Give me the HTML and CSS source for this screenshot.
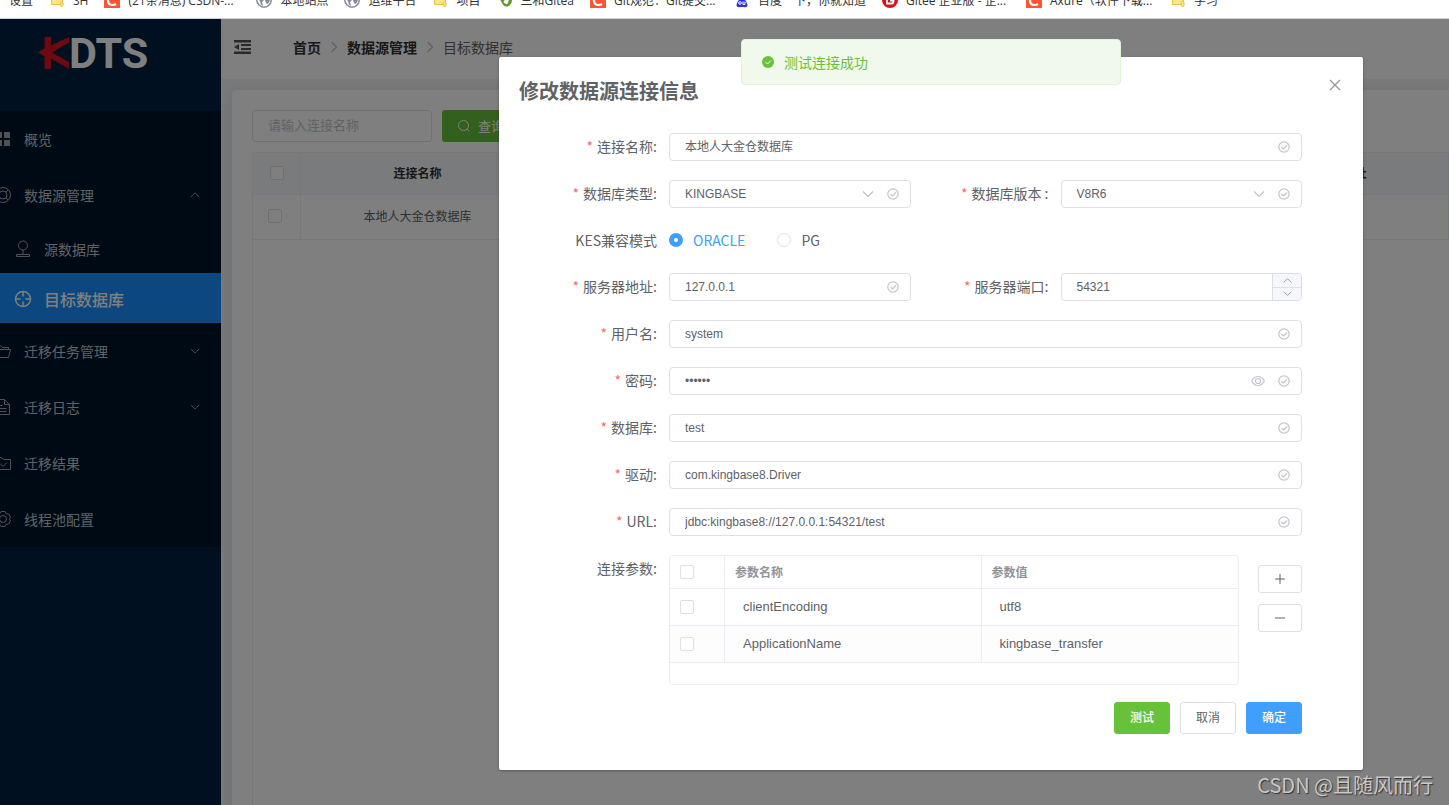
FILE: index.html
```html
<!DOCTYPE html>
<html lang="zh-CN">
<head>
<meta charset="utf-8">
<title>KDTS</title>
<link rel="stylesheet" href="styles.css">
</head>
<body>
<svg class="defs" aria-hidden="true">
  <symbol id="i-folder" viewBox="0 0 16 16"><path d="M2.500 1.500h11v11h-11z" fill="#ffe48f" stroke="#e8c04a"/><path d="M12 14.500c-1.500-1-1-4 .5-5.500c2 1 2 4.500 1 5.500z" fill="#ffe48f" stroke="#e8c04a"/></symbol>
  <symbol id="i-csdn" viewBox="0 0 16 16"><rect width="16" height="16" fill="#fc5531"/><path d="M12.500 4.500C8 2.500 4 4.500 4 8.500c0 4.500 4.500 5.500 8 3.500" fill="none" stroke="#fff" stroke-width="2.200"/></symbol>
  <symbol id="i-globe" viewBox="0 0 16 16"><circle cx="8" cy="8" r="7.200" fill="#fff" stroke="#858b98" stroke-width="1.500"/><path d="M2 4l4 1 2 3-2 2 1 4-2-1-1-4-2-2zM9 2l4 2 1 4-2 4-2-1-1-3 2-2-2-1z" fill="#858b98"/></symbol>
  <symbol id="i-gitea" viewBox="0 0 16 16"><path d="M0 6c2-2 6 0 8-2 4-1 7 0 7 4s-3 7-6 6.500S5 11 4 9 1 8 0 6z" fill="#609926"/><path d="M8 7l4 1.500-2 4-3.500-2z" fill="#fff"/></symbol>
  <symbol id="i-baidu" viewBox="0 0 16 16"><path d="M8 6c3 0 5 5 5.500 7 0 3-3 2-5.500 2s-5.500 1-5.500-2C3 11 5 6 8 6z" fill="#2932e1"/><g fill="#2932e1"><circle cx="3" cy="6" r="2"/><circle cx="6" cy="3" r="2"/><circle cx="10" cy="3" r="2"/><circle cx="13" cy="6" r="2"/></g><circle cx="6" cy="11" r="1.300" fill="none" stroke="#fff"/><path d="M9 9.500v3h2v-3" fill="none" stroke="#fff"/></symbol>
  <symbol id="i-gitee" viewBox="0 0 16 16"><circle cx="8" cy="8" r="8" fill="#d8111f"/><path d="M12 4.500H7Q5 4.500 5 7v4.500h5Q11.500 11.500 11.500 8.500H8" fill="none" stroke="#fff" stroke-width="1.800"/></symbol>
  <symbol id="i-check" viewBox="0 0 12 12"><g fill="none" stroke="currentColor" stroke-width="1.200"><circle cx="6" cy="6" r="5.200"/><path d="M3.500 6l2 2 3.500-3.500"/></g></symbol>
  <symbol id="i-down" viewBox="0 0 12 12"><path d="M1 3.500l5 5 5-5" fill="none" stroke="currentColor" stroke-width="1.200"/></symbol>
  <symbol id="i-up" viewBox="0 0 12 12"><path d="M1 8.500l5-5 5 5" fill="none" stroke="currentColor" stroke-width="1.200"/></symbol>
  <symbol id="i-right" viewBox="0 0 12 12"><path d="M3.500 1l5 5-5 5" fill="none" stroke="currentColor" stroke-width="1.400"/></symbol>
</svg>

<nav class="bookmarks" aria-label="书签">
  <a href="#"><span>设置</span></a>
  <a href="#"><svg><use href="#i-folder"/></svg><span>SH</span></a>
  <a href="#"><svg><use href="#i-csdn"/></svg><span class="wide">(21条消息) CSDN-...</span></a>
  <a href="#"><svg><use href="#i-globe"/></svg><span>本地站点</span></a>
  <a href="#"><svg><use href="#i-globe"/></svg><span>运维平台</span></a>
  <a href="#"><svg><use href="#i-folder"/></svg><span>项目</span></a>
  <a href="#"><svg><use href="#i-gitea"/></svg><span>三和Gitea</span></a>
  <a href="#"><svg><use href="#i-csdn"/></svg><span class="long">Git规范：Git提交...</span></a>
  <a href="#"><svg><use href="#i-baidu"/></svg><span>百度一下，你就知道</span></a>
  <a href="#"><svg><use href="#i-gitee"/></svg><span class="long">Gitee 企业版 - 企...</span></a>
  <a href="#"><svg><use href="#i-csdn"/></svg><span class="long">Axure（软件下载...</span></a>
  <a href="#"><svg><use href="#i-folder"/></svg><span>学习</span></a>
</nav>

<div class="app">
  <aside class="sidebar">
    <div class="logo">
      <svg class="logo-mark" viewBox="0 0 31 32"><path d="M0 15.500l6.500-4V0H13v8.500L31 0v5.500L14 15.500 31 25v7L13 21.500V32H6.500V19.500z" fill="#d8141f"/></svg>
      <span>DTS</span>
    </div>
    <nav class="menu">
      <a class="item" href="#"><svg viewBox="0 0 18 18"><path d="M2 2h6v6H2zM10 2h6v6h-6zM2 10h6v6H2zM10 10h6v6h-6z" fill="currentColor"/></svg><span>概览</span></a>
      <a class="item" href="#"><svg class="line" viewBox="0 0 18 18"><circle cx="9" cy="9" r="7.500"/><circle cx="9" cy="9" r="4"/><path d="M4 4l2 2M14 4l-2 2M4 14l2-2M14 14l-2-2"/></svg><span>数据源管理</span><svg class="arrow"><use href="#i-up"/></svg></a>
      <a class="item sub" href="#"><svg class="line" viewBox="0 0 18 18"><circle cx="9" cy="5.500" r="4.500"/><path d="M9 10v4M2.500 16.500v-2h13v2z"/></svg><span>源数据库</span></a>
      <a class="item sub active" href="#"><svg class="line" viewBox="0 0 18 18"><circle cx="9" cy="9" r="7.500"/><path d="M9 1.500v5M9 11.500v5M1.500 9h5M11.500 9h5"/></svg><span>目标数据库</span></a>
      <a class="item" href="#"><svg class="line" viewBox="0 0 18 18"><path d="M1.500 15.500v-12h5l2 2h6v2.500M1.500 15.500h13l2-8h-11l-2 4"/></svg><span>迁移任务管理</span><svg class="arrow"><use href="#i-down"/></svg></a>
      <a class="item" href="#"><svg class="line" viewBox="0 0 18 18"><path d="M2.500 1.500h8l5 5v10h-13zM10.500 1.500v5h5M5.500 7.500h3M5.500 10.500h7M5.500 13.500h7"/></svg><span>迁移日志</span><svg class="arrow"><use href="#i-down"/></svg></a>
      <a class="item" href="#"><svg class="line" viewBox="0 0 18 18"><path d="M1.500 3.500h6l2 2h7v10h-15zM6 9.500l3 3 4-4"/></svg><span>迁移结果</span></a>
      <a class="item" href="#"><svg class="line" viewBox="0 0 18 18"><path d="M7 1.500h4l1 2 2.500.5 2 3-1 2 1 2-2 3-2.500.500-1 2H7l-1-2-2.500-.5-2-3 1-2-1-2 2-3L6 3.500z"/><circle cx="9" cy="9" r="3.500"/></svg><span>线程池配置</span></a>
    </nav>
  </aside>

  <div class="page">
    <header class="topbar">
      <svg class="fold" viewBox="0 0 17 14"><path d="M0 0h17v2.500H0zM7 4h10v2H7zM7 8h10v2H7zM0 11.500h17V14H0zM0 7l5-3v6z" fill="#555"/></svg>
      <nav class="crumbs">
        <a href="#">首页</a><svg><use href="#i-right"/></svg><a href="#">数据源管理</a><svg><use href="#i-right"/></svg><span>目标数据库</span>
      </nav>
    </header>
    <main class="card">
      <div class="filters">
        <input type="text" placeholder="请输入连接名称" aria-label="连接名称">
        <button type="button"><svg viewBox="0 0 12 12"><circle cx="5.500" cy="5.500" r="5" fill="none" stroke="currentColor"/><path d="M9 9l2.500 2.500" stroke="currentColor"/></svg>查询</button>
      </div>
      <div class="list">
        <table>
          <thead><tr><th class="pick"><input type="checkbox" aria-label="全选"></th><th class="col">连接名称</th><th class="col">数据库类型</th><th class="col">数据库版本</th><th class="col">用户名</th><th>主机地址</th></tr></thead>
          <tbody><tr><td class="pick"><input type="checkbox" aria-label="选择"></td><td>本地人大金仓数据库</td><td></td><td></td><td></td><td></td></tr></tbody>
        </table>
      </div>
    </main>
  </div>

  <div class="overlay">
    <section class="dialog" role="dialog" aria-labelledby="dlg-title">
      <div class="message" role="alert">
        <svg viewBox="0 0 12 12"><circle cx="6" cy="6" r="6" fill="#67c23a"/><path d="M3.500 6l2 2 3.500-3.500" fill="none" stroke="#f0f9eb"/></svg>
        <span>测试连接成功</span>
      </div>
      <header class="dialog-head">
        <h2 id="dlg-title">修改数据源连接信息</h2>
        <button type="button" class="close" aria-label="关闭"><svg viewBox="0 0 12 12"><path d="M1 1l10 10M11 1L1 11" stroke="currentColor" stroke-width="1.200"/></svg></button>
      </header>
      <form class="form">
        <div class="field full"><label class="req" for="f-name">连接名称:</label><div class="box"><input id="f-name" type="text" value="本地人大金仓数据库"><svg><use href="#i-check"/></svg></div></div>
        <div class="field"><label class="req" for="f-type">数据库类型:</label><div class="box"><select id="f-type"><option>KINGBASE</option></select><svg><use href="#i-down"/></svg><svg><use href="#i-check"/></svg></div></div>
        <div class="field"><label class="req" for="f-ver">数据库版本 :</label><div class="box"><select id="f-ver"><option>V8R6</option></select><svg><use href="#i-down"/></svg><svg><use href="#i-check"/></svg></div></div>
        <div class="field full"><span class="label">KES兼容模式</span><div class="radios"><label><input type="radio" name="mode" checked><span>ORACLE</span></label><label><input type="radio" name="mode"><span>PG</span></label></div></div>
        <div class="field"><label class="req" for="f-host">服务器地址:</label><div class="box"><input id="f-host" type="text" value="127.0.0.1"><svg><use href="#i-check"/></svg></div></div>
        <div class="field"><label class="req" for="f-port">服务器端口:</label><div class="box number"><input id="f-port" type="number" value="54321"><div class="steps"><button type="button" aria-label="增加"><svg><use href="#i-up"/></svg></button><button type="button" aria-label="减少"><svg><use href="#i-down"/></svg></button></div></div></div>
        <div class="field full"><label class="req" for="f-user">用户名:</label><div class="box"><input id="f-user" type="text" value="system"><svg><use href="#i-check"/></svg></div></div>
        <div class="field full"><label class="req" for="f-pwd">密码:</label><div class="box"><input id="f-pwd" type="password" value="system"><svg class="eye" viewBox="0 0 14 12"><g fill="none" stroke="currentColor" stroke-width="1.200"><path d="M.7 6C3.500 0 10.500 0 13.300 6C10.500 12 3.500 12 .7 6z"/><circle cx="7" cy="6" r="2.500"/></g></svg><svg><use href="#i-check"/></svg></div></div>
        <div class="field full"><label class="req" for="f-db">数据库:</label><div class="box"><input id="f-db" type="text" value="test"><svg><use href="#i-check"/></svg></div></div>
        <div class="field full"><label class="req" for="f-drv">驱动:</label><div class="box"><input id="f-drv" type="text" value="com.kingbase8.Driver"><svg><use href="#i-check"/></svg></div></div>
        <div class="field full"><label class="req" for="f-url">URL:</label><div class="box"><input id="f-url" type="text" value="jdbc:kingbase8://127.0.0.1:54321/test"><svg><use href="#i-check"/></svg></div></div>
        <div class="field full"><span class="label">连接参数:</span>
          <div class="params">
            <div class="params-table">
              <table>
                <thead><tr><th class="pick"><input type="checkbox" aria-label="全选参数"></th><th>参数名称</th><th>参数值</th></tr></thead>
                <tbody>
                  <tr><td class="pick"><input type="checkbox" aria-label="clientEncoding"></td><td>clientEncoding</td><td>utf8</td></tr>
                  <tr><td class="pick"><input type="checkbox" aria-label="ApplicationName"></td><td>ApplicationName</td><td>kingbase_transfer</td></tr>
                </tbody>
              </table>
            </div>
            <div class="params-actions">
              <button type="button" aria-label="添加"><svg viewBox="0 0 12 12"><path d="M1 6h10M6 1v10" stroke="currentColor"/></svg></button>
              <button type="button" aria-label="删除"><svg viewBox="0 0 12 12"><path d="M1 6h10" stroke="currentColor"/></svg></button>
            </div>
          </div>
        </div>
      </form>
      <footer class="dialog-foot">
        <button type="button" class="success">测试</button>
        <button type="button">取消</button>
        <button type="button" class="primary">确定</button>
      </footer>
    </section>
  </div>
  <div class="watermark">CSDN @且随风而行</div>
</div>
</body>
</html>
```

FILE: styles.css
```css
* { box-sizing: border-box; }
body {
  margin: 0;
  height: 100vh;
  display: flex;
  flex-direction: column;
  overflow: hidden;
  font: 14px/20px "Noto Sans CJK SC", sans-serif;
  color: #606266;
}
a { color: inherit; text-decoration: none; }
svg { display: block; flex: none; width: 12px; height: 12px; }
button, input, select { font: inherit; color: inherit; margin: 0; }
button { cursor: pointer; padding: 0; }
table { border-collapse: separate; border-spacing: 0; width: 100%; table-layout: fixed; }
.defs { position: absolute; width: 0; height: 0; }

input[type="checkbox"], input[type="radio"] {
  appearance: none;
  display: block;
  width: 14px;
  height: 14px;
  background: #fff;
  border: 1px solid #dcdfe6;
  border-radius: 2px;
}
input[type="radio"] { border-radius: 50%; }
input[type="radio"]:checked { border: 5px solid #409eff; }

/* bookmarks */
.bookmarks {
  flex: none;
  height: 19px;
  display: flex;
  align-items: flex-end;
  gap: 16px;
  padding: 0 9px 10px;
  overflow: hidden;
  background: #fff;
  border-bottom: 1px solid #d0d0d0;
  color: #333;
  font: 12px/18px "Open Sans", "Noto Sans CJK SC", sans-serif;
  white-space: nowrap;
}
.bookmarks a { display: flex; gap: 8px; height: 16px; }
.bookmarks svg { width: 16px; height: 16px; }
.bookmarks .wide { width: 112px; }
.bookmarks .long { width: 104px; }

.app { position: relative; flex: 1; min-height: 0; display: flex; overflow: hidden; }

/* sidebar */
.sidebar { flex: none; width: 221px; background: #002140; overflow: hidden; }
.logo {
  height: 92px;
  padding: 18px 0 0 38px;
  display: flex;
  color: #fff;
  font: bold 43px/32px Roboto, sans-serif;
}
.logo-mark { width: 31px; height: 32px; }
.menu { margin-left: -6px; background: #001529; color: #bfc4ca; }
.item { display: flex; align-items: center; gap: 12px; height: 56px; padding-right: 21px; }
.item svg { width: 18px; height: 18px; color: #a0a3a8; }
.item .arrow { width: 10px; height: 10px; margin-left: auto; color: #8c9199; }
.item.sub { height: 50px; padding-top: 2px; padding-left: 20px; }
.line { fill: none; stroke: currentColor; stroke-width: 1; }
.item.active { background: #1890ff; color: #fff; font-size: 16px; font-weight: 500; }
.item.active svg { color: #fff; stroke-width: 1.5; }

/* page */
.page { flex: 1; min-width: 0; display: flex; flex-direction: column; background: #f0f2f5; }
.topbar { flex: none; height: 60px; display: flex; align-items: center; gap: 42px; padding: 0 13px 4px; background: #fff; }
.fold { width: 17px; height: 14px; }
.crumbs { display: flex; align-items: center; gap: 7px; color: #606266; }
.crumbs a { color: #303133; font-weight: bold; }
.crumbs svg { color: #c0c4cc; }
.card {
  flex: 1;
  display: flex;
  flex-direction: column;
  gap: 10px;
  margin: 11px 0 0 11px;
  padding: 20px 0 0 20px;
  background: #fff;
  border-radius: 4px 0 0 0;
  box-shadow: 0 2px 12px rgba(0, 0, 0, 0.1);
}
.filters { display: flex; gap: 10px; }
.filters input { width: 180px; height: 32px; padding: 0 15px 3px; border: 1px solid #dcdfe6; border-radius: 4px; background: #fff; font-size: 13px; }
.filters input::placeholder { color: #c0c4cc; }
.filters button { display: flex; align-items: center; gap: 8px; height: 32px; padding: 0 16px; border: 0; border-radius: 3px; background: #67c23a; color: #fff; font-size: 13px; }
.list { flex: 1; border: solid #ebeef5; border-width: 1px 0 0 1px; font-size: 12px; }
.list th, .list td { height: 42px; padding: 0 0 2px; text-align: center; border: solid #ebeef5; border-width: 0 1px 1px 0; }
.list th { background: #f5f7fa; color: #303133; }
.list td { height: 45px; }
.list .pick { width: 48px; }
.list .col { width: 234px; }
.list th input { margin: 0 auto; }
.list td input { margin-left: 15px; }

/* dialog */
.overlay { position: absolute; inset: 0; padding: 38px 86px 0 499px; background: rgba(0, 0, 0, 0.5); }
.dialog { position: relative; padding: 20px 61px 36px 20px; background: #fff; border-radius: 2px; box-shadow: 0 1px 3px rgba(0, 0, 0, 0.3); }
.message {
  position: absolute;
  top: -18px;
  left: 50%;
  transform: translateX(-50%);
  width: 380px;
  height: 46px;
  display: flex;
  align-items: center;
  gap: 10px;
  padding: 0 20px 1px;
  background: #f0f9eb;
  border: 1px solid #e1f3d8;
  border-radius: 4px;
  color: #67c23a;
}
.dialog-head h2 { margin: 0; font-size: 20px; line-height: 28px; }
.close { position: absolute; top: 22px; right: 22px; border: 0; background: none; color: #909399; }
.form { display: grid; grid-template-columns: 1fr 1fr; row-gap: 19px; margin-top: 28px; }
.full { grid-column: 1 / -1; }
.field { display: flex; min-width: 0; }
.field > label, .label { flex: none; width: 150px; padding-right: 12px; text-align: right; line-height: 26px; height: 26px; }
.req::before { content: "*"; margin-right: 4px; color: #f56c6c; }
.box {
  flex: 1;
  min-width: 0;
  height: 28px;
  display: flex;
  align-items: center;
  gap: 13px;
  padding: 0 11px 0 15px;
  border: 1px solid #dcdfe6;
  border-radius: 4px;
  color: #c0c4cc;
  font: 12px/26px "Liberation Sans", "Noto Sans CJK SC", sans-serif;
}
.box input, .box select { flex: 1; min-width: 0; height: 26px; padding: 0; border: 0; outline: 0; background: none; appearance: none; color: #606266; }
.box .eye { width: 14px; }
.number { padding-right: 0; overflow: hidden; }
.box input[type="number"] { appearance: textfield; }
.steps { width: 29px; height: 26px; display: grid; border-left: 1px solid #dcdfe6; }
.steps button { display: grid; place-items: center; border: 0; background: #f5f7fa; color: #909399; }
.steps button + button { border-top: 1px solid #dcdfe6; }
.steps svg { width: 9px; height: 9px; }
.radios { display: flex; gap: 32px; height: 27px; padding-bottom: 1px; align-items: center; }
.radios label { display: flex; align-items: center; gap: 10px; }
.radios input:checked + span { color: #409eff; }

.params { flex: 1; display: flex; align-items: flex-start; gap: 19px; }
.params-table { flex: 1; padding-bottom: 21px; border: 1px solid #ebeef5; border-radius: 4px; font: 13px/20px "Liberation Sans", sans-serif; }
.params th, .params td { height: 37px; padding: 0 18px; text-align: left; border: solid #ebeef5; border-width: 0 1px 1px 0; }
.params tbody tr:nth-child(even) { background: #fdfdfe; }
.params th { height: 33px; padding: 0 10px; color: #909399; font: bold 12px/20px "Noto Sans CJK SC", sans-serif; }
.params tr > :last-child { border-right: 0; }
.params .pick { width: 55px; padding: 0 10px; }
.params-actions { display: grid; gap: 11px; padding-top: 10px; }
.params-actions button, .dialog-foot button { display: grid; place-items: center; background: #fff; border: 1px solid #dcdfe6; border-radius: 3px; }
.params-actions button { width: 44px; height: 28px; }
.dialog-foot { display: flex; justify-content: flex-end; gap: 10px; margin-top: 17px; }
.dialog-foot button { width: 56px; height: 32px; padding-bottom: 2px; font-size: 12px; }
.dialog-foot .success { background: #67c23a; border-color: #67c23a; color: #fff; font-weight: 500; }
.dialog-foot .primary { background: #409eff; border-color: #409eff; color: #fff; font-weight: 500; }

.watermark { position: absolute; right: 16px; bottom: 6px; color: #c8c8c8; font-size: 20px; line-height: 28px; text-shadow: 1px 1px 1px #333; }
```
